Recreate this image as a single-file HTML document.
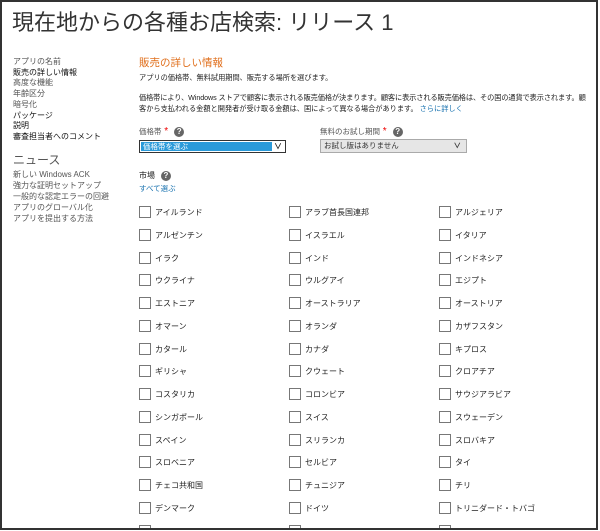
<!DOCTYPE html>
<html><head><meta charset="utf-8"><style>
*{margin:0;padding:0;box-sizing:border-box}
html,body{width:600px;height:531px;overflow:hidden}
body{background:#fff;font-family:"Liberation Sans","Noto Sans CJK JP",sans-serif;color:#222;position:relative}
#frame{position:absolute;left:0;top:0;width:598px;height:531px;border:2px solid #333;z-index:5;pointer-events:none}
.a{position:absolute;white-space:nowrap}
.s{font-size:8px;color:#555}
.sb{font-size:8px;color:#111}
.q{display:inline-block;width:10px;height:10px;border-radius:50%;background:#666;color:#fff;font-size:8px;line-height:10px;text-align:center;font-weight:bold;vertical-align:middle;margin-left:6px}
.cb{position:absolute;width:12px;height:12px;border:1px solid #777;background:#fff}
.cl{position:absolute;font-size:8px;color:#222;white-space:nowrap}
</style></head><body>
<div id="frame"></div>
<div class="a" style="left:12px;top:5px;font-size:22px;color:#333">現在地からの各種お店検索: リリース 1</div>

<div class="a s" style="left:13px;top:56px">アプリの名前</div>
<div class="a sb" style="left:13px;top:67px">販売の詳しい情報</div>
<div class="a s" style="left:13px;top:77px">高度な機能</div>
<div class="a s" style="left:13px;top:88px">年齢区分</div>
<div class="a s" style="left:13px;top:99px">暗号化</div>
<div class="a sb" style="left:13px;top:110px">パッケージ</div>
<div class="a sb" style="left:13px;top:120px">説明</div>
<div class="a sb" style="left:13px;top:131px">審査担当者へのコメント</div>
<div class="a" style="left:13px;top:151px;font-size:12px;color:#555">ニュース</div>
<div class="a s" style="left:13px;top:169px">新しい Windows ACK</div>
<div class="a s" style="left:13px;top:180px">強力な証明セットアップ</div>
<div class="a s" style="left:13px;top:191px">一般的な認定エラーの回避</div>
<div class="a s" style="left:13px;top:202px">アプリのグローバル化</div>
<div class="a s" style="left:13px;top:213px">アプリを提出する方法</div>

<div class="a" style="left:139px;top:55px;font-size:10.5px;color:#e0701e">販売の詳しい情報</div>
<div class="a" style="left:139px;top:73px;font-size:7.2px">アプリの価格帯、無料試用期間、販売する場所を選びます。</div>
<div class="a" style="left:139px;top:93px;font-size:7.2px;letter-spacing:-0.1px">価格帯により、Windows ストアで顧客に表示される販売価格が決まります。顧客に表示される販売価格は、その国の通貨で表示されます。顧</div>
<div class="a" style="left:139px;top:104px;font-size:7.2px">客から支払われる金額と開発者が受け取る金額は、国によって異なる場合があります。 <span style="color:#1a73b0">さらに詳しく</span></div>

<div class="a" style="left:139px;top:126px;font-size:7.5px;color:#555">価格帯<span style="color:#e00;font-size:10px"> *</span><span class="q">?</span></div>
<div class="a" style="left:139px;top:140px;width:147px;height:13px;border:1px solid #333;background:#fff">
 <div style="position:absolute;left:1px;top:1px;width:131px;height:9px;background:#2b9ad9;color:#fff;font-size:7.5px;line-height:9px;padding-left:2px">価格帯を選ぶ</div>
 <div style="position:absolute;right:3px;top:0px;font-size:8px;line-height:11px;font-weight:bold">∨</div>
</div>
<div class="a" style="left:320px;top:126px;font-size:7.5px;color:#555">無料のお試し期間<span style="color:#e00;font-size:10px"> *</span><span class="q">?</span></div>
<div class="a" style="left:320px;top:139px;width:147px;height:14px;border:1px solid #aaa;background:#e6e6e6;font-size:7.5px;line-height:12px;padding-left:3px;color:#333">お試し版はありません<span style="position:absolute;right:5px;top:0;font-weight:bold">∨</span></div>

<div class="a" style="left:139px;top:170px;font-size:8px">市場<span class="q">?</span></div>
<div class="a" style="left:139px;top:183px;font-size:7.5px;color:#1a73b0">すべて選ぶ</div>

<div id="grid"></div>
<script>
var n=[["アイルランド","アラブ首長国連邦","アルジェリア"],["アルゼンチン","イスラエル","イタリア"],["イラク","インド","インドネシア"],["ウクライナ","ウルグアイ","エジプト"],["エストニア","オーストラリア","オーストリア"],["オマーン","オランダ","カザフスタン"],["カタール","カナダ","キプロス"],["ギリシャ","クウェート","クロアチア"],["コスタリカ","コロンビア","サウジアラビア"],["シンガポール","スイス","スウェーデン"],["スペイン","スリランカ","スロバキア"],["スロベニア","セルビア","タイ"],["チェコ共和国","チュニジア","チリ"],["デンマーク","ドイツ","トリニダード・トバゴ"],["","",""]];
var h="",xs=[139,289,439];
for(var r=0;r<n.length;r++){var y=206+r*22.75;for(var c=0;c<3;c++){h+='<div class="cb" style="left:'+xs[c]+'px;top:'+y+'px"></div><div class="cl" style="left:'+(xs[c]+16)+'px;top:'+(y+1)+'px">'+n[r][c]+'</div>';}}
document.getElementById("grid").innerHTML=h;
</script>
<div class="a" style="left:0;top:529px;width:600px;height:2px;background:#fff;z-index:6"></div>
<div class="a" style="left:0;top:528px;width:598px;height:2px;background:#333;z-index:7"></div>
</body></html>
